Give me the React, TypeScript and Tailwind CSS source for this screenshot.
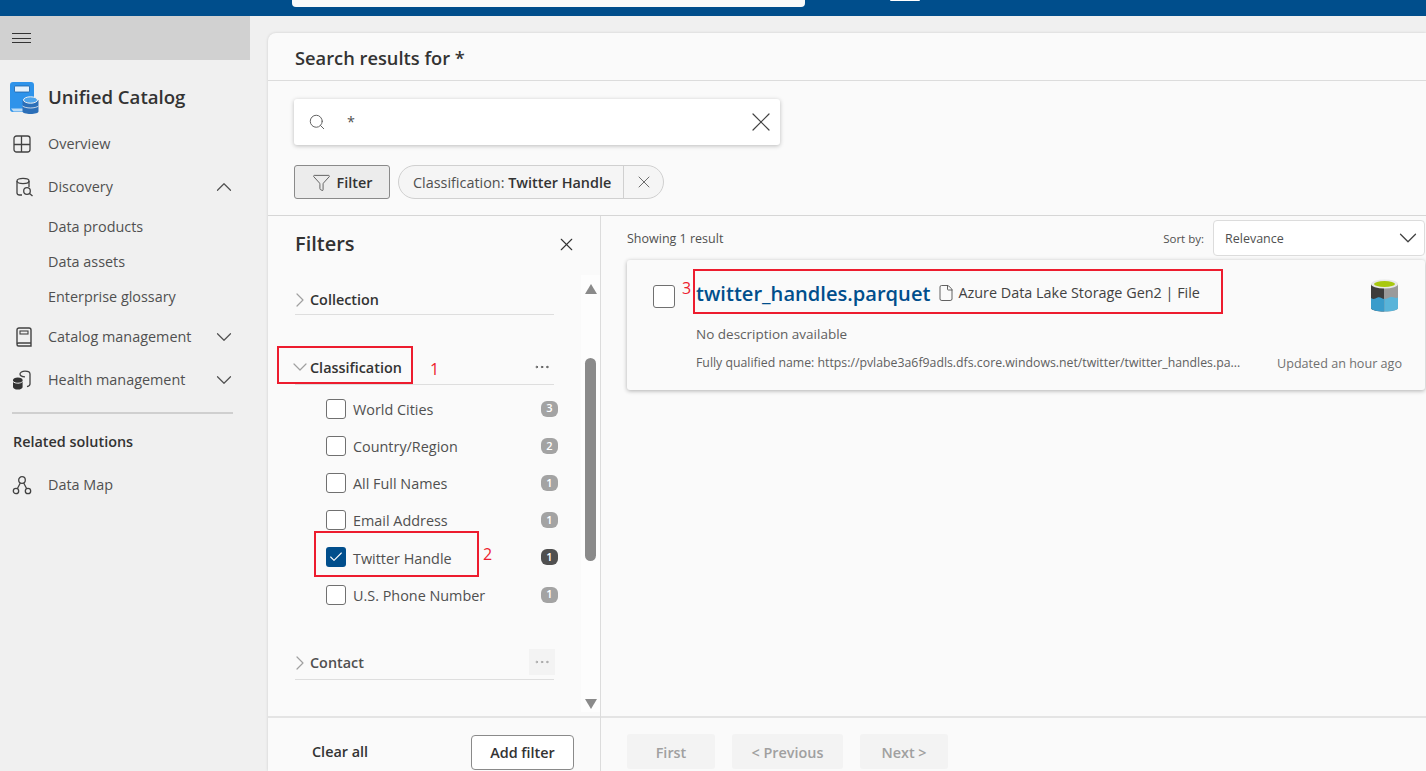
import { ChevronDown, ChevronRight, ChevronUp, Ellipsis, Search, X, Filter, File, Check } from "lucide-react"

const OverviewIcon = () => (
  <svg className="ml-[13px]" width="18" height="18" viewBox="0 0 18 18" fill="none" stroke="#424242" strokeWidth="1.3">
    <rect x="1" y="1" width="16" height="16" rx="2.5" />
    <path d="M8.5 1v16M1 9.5h16" />
  </svg>
)

const DiscoveryIcon = () => (
  <svg className="ml-[15px]" width="20" height="20" viewBox="0 0 20 20" fill="none" stroke="#424242" strokeWidth="1.3">
    <path d="M7 18H4.5C3 18 2 17.200 2 16V4" />
    <ellipse cx="8" cy="4" rx="6" ry="2.600" />
    <path d="M14 4v6" />
    <circle cx="12" cy="14" r="3.300" />
    <path d="M14.500 16.500l3 2.500" />
  </svg>
)

const BookIcon = () => (
  <svg className="ml-[15px]" width="18" height="20" viewBox="0 0 18 20" fill="none" stroke="#424242" strokeWidth="1.4">
    <path d="M2 17V3a2 2 0 0 1 2-2h10a2 2 0 0 1 2 2v16H3.500A1.500 1.500 0 0 1 2 17.500a1.500 1.500 0 0 1 1.500-1.500H16" />
    <rect x="5" y="4" width="8" height="3" strokeWidth="1.100" />
  </svg>
)

const HealthIcon = () => (
  <svg className="ml-[12px]" width="20" height="20" viewBox="0 0 20 20" fill="none">
    <path d="M8 4c0-1.600 2.200-2.800 5-2.800s5 1.200 5 2.800v10c0 1.300-1.200 2.200-3 2.600" stroke="#424242" strokeWidth="1.300" />
    <path d="M8 4c0 1.600 2.200 2.800 5 2.800" stroke="#424242" strokeWidth="1.300" />
    <path d="M1 10c0-1.500 2-2.600 4.800-2.600s4.800 1.100 4.800 2.600v7c0 1.500-2 2.600-4.800 2.600S1 18.500 1 17z" fill="#333" />
    <path d="M1 11.500c1.200 1.200 3 1.700 4.800 1.700s3.600-.5 4.800-1.700" stroke="#f0f0f0" strokeWidth="1" />
  </svg>
)

const DataMapIcon = () => (
  <svg className="ml-[12px]" width="20" height="20" viewBox="0 0 20 20" fill="none" stroke="#424242" strokeWidth="1.300">
    <circle cx="10" cy="5" r="3.300" />
    <circle cx="4" cy="16" r="2.700" />
    <circle cx="16" cy="16" r="2.700" />
    <path d="M8.300 8L5.300 13.700M11.700 8l3 5.700" />
  </svg>
)

const CatalogLogo = () => (
  <svg width="29" height="32" viewBox="0 0 29 32">
    <path d="M3 0h18a3 3 0 0 1 3 3v27H3a3 3 0 0 1-3-3V3a3 3 0 0 1 3-3z" fill="#2e93ea" />
    <rect x="4.500" y="4" width="15" height="6" rx="1" fill="#e3f1fc" stroke="#1c5fa5" strokeWidth=".8" />
    <path d="M1 26.500h14v3H3.500z" fill="#bcdcf6" />
    <path d="M12.500 18h16v11.500c0 1.400-3.600 2.500-8 2.500s-8-1.100-8-2.500z" fill="#2b6fb8" />
    <ellipse cx="20.500" cy="18" rx="7" ry="3.200" fill="#4ea5ec" stroke="#f0f0f0" strokeWidth="1" />
    <path d="M12.500 24c1.500 1.200 4.500 2 8 2s6.500-.8 8-2" fill="none" stroke="#f0f0f0" strokeWidth=".8" />
  </svg>
)

const StorageIcon = () => (
  <svg width="27" height="33" viewBox="0 0 27 33">
    <path d="M0 5h13.500v27.500C6 32.500 0 31 0 29z" fill="#3c3c3c" />
    <path d="M13.500 5H27v24c0 2-6 3.500-13.500 3.500z" fill="#9a9a9a" />
    <path d="M0 19c3 2 4 .5 6.500-.5 3-1 4 1.500 7 1.500v12.500C6 32.500 0 31 0 29z" fill="#3a9ccb" />
    <path d="M13.500 20c3 0 5-2.500 7.500-2s4 1.500 6 .5V29c0 2-6 3.500-13.500 3.500z" fill="#59b4d9" />
    <ellipse cx="13.500" cy="5" rx="13.500" ry="4.500" fill="#e8e8e8" />
    <ellipse cx="13.500" cy="5" rx="10.500" ry="3" fill="#a8c80f" />
  </svg>
)

const NavRow = ({ icon, label, chevron }: { icon: React.ReactNode; label: string; chevron?: "up" | "down" }) => (
  <div className="flex h-[43px] items-center text-[#505050]">
    <div className="flex w-[48px] shrink-0">{icon}</div>
    <span className="flex-1">{label}</span>
    {chevron === "up" && <ChevronUp className="mr-[13px] h-[26px] w-[26px]" strokeWidth={1.1} />}
    {chevron === "down" && <ChevronDown className="mr-[13px] h-[26px] w-[26px]" strokeWidth={1.1} />}
  </div>
)

const SubRow = ({ label }: { label: string }) => (
  <div className="flex h-[35px] items-center pl-[48px] text-[#505050]">{label}</div>
)

const FilterItem = ({ label, count, checked }: { label: string; count: number; checked?: boolean }) => (
  <div className="flex h-[37.200px] items-center pl-[58px] pr-[23px]">
    {checked ? (
      <div className="flex h-[20px] w-[20px] items-center justify-center rounded-[3px] bg-[#004e8c]">
        <Check className="h-[16px] w-[16px] text-white" strokeWidth={1.6} />
      </div>
    ) : (
      <div className="h-[20px] w-[20px] rounded-[3px] border border-[#707070] bg-white" />
    )}
    <span className="ml-[7px] flex-1 pt-[2px] text-[#505050]">{label}</span>
    <span
      className={
        checked
          ? "flex h-[16px] w-[17px] items-center justify-center rounded-[6px] bg-[#505050] text-[11px] font-semibold text-white"
          : "flex h-[16px] w-[17px] items-center justify-center rounded-[6px] bg-[#a3a3a3] text-[11px] font-semibold text-white"
      }
    >
      {count}
    </span>
  </div>
)

export default function App() {
  return (
    <div className="flex h-[771px] w-full flex-col overflow-hidden bg-[#f0f0f0] font-['Open_Sans',sans-serif] text-[14.400px] text-[#424242]">
      {/* top bar, cut off by the screenshot */}
      <div className="flex h-[16px] shrink-0 items-start bg-[#004e8c] pl-[292px]">
        <div className="h-[7px] w-[513px] rounded-b-[4px] bg-[#fafafa]" />
        <div className="ml-[85px] h-[1px] w-[30px] rounded-b bg-white" />
      </div>

      <div className="flex min-h-0 flex-1">
        <aside className="w-[250px] shrink-0">
          <div className="flex h-[44px] items-center bg-[#d1d1d1] pl-[12px]">
            <div className="flex w-[19px] flex-col gap-[3.500px]">
              <div className="h-px bg-[#333]" />
              <div className="h-px bg-[#333]" />
              <div className="h-px bg-[#333]" />
            </div>
          </div>
          <div className="mt-[22px] flex h-[31px] items-center pl-[9.500px]">
            <CatalogLogo />
            <span className="mb-[2px] ml-[9.500px] text-[18.600px] font-semibold text-[#333]">Unified Catalog</span>
          </div>
          <div className="mt-[9px]">
            <NavRow icon={<OverviewIcon />} label="Overview" />
            <NavRow icon={<DiscoveryIcon />} label="Discovery" chevron="up" />
            <div className="mt-px">
              <SubRow label="Data products" />
              <SubRow label="Data assets" />
              <SubRow label="Enterprise glossary" />
            </div>
            <div className="mt-px">
              <NavRow icon={<BookIcon />} label="Catalog management" chevron="down" />
              <NavRow icon={<HealthIcon />} label="Health management" chevron="down" />
            </div>
          </div>
          <div className="ml-[12px] mr-[17px] mt-[11px] h-[2px] bg-[#cfcfcf]" />
          <div className="mt-[17px] pl-[13px] font-semibold text-[#333]">Related solutions</div>
          <div className="mt-[11px]">
            <NavRow icon={<DataMapIcon />} label="Data Map" />
          </div>
        </aside>

        <main className="ml-[18px] mt-[17px] flex min-w-0 flex-1 flex-col rounded-tl-[8px] bg-[#fafafa] shadow-[0_0_3px_rgba(0,0,0,0.15)]">
          <div className="flex h-[48px] shrink-0 items-center border-b border-[#dcdcdc] pl-[27px] pt-[3px] text-[18.300px] font-semibold text-[#333]">
            Search results for *
          </div>

          <div className="shrink-0 border-b border-[#d6d6d6] pb-[16px] pl-[26px]">
            <div className="mt-[18px] flex h-[46px] w-[486px] items-center rounded-[3px] bg-white pl-[14px] pr-[3px] shadow-[0_1px_4px_rgba(0,0,0,0.25)]">
              <Search className="h-[18px] w-[18px] text-[#606060]" strokeWidth={1.3} />
              <span className="ml-[21px] flex-1 text-[#505050]">*</span>
              <X className="h-[32px] w-[32px] text-[#424242]" strokeWidth={0.9} />
            </div>
            <div className="mt-[20px] flex h-[34px] items-center">
              <div className="flex h-full w-[96px] items-center justify-center rounded-[3px] border border-[#8a8a8a] bg-[#ececec] font-semibold text-[#333]">
                <Filter className="mr-[6px] h-[19px] w-[19px] text-[#505050]" strokeWidth={1.1} />
                <span className="pt-[2px]">Filter</span>
              </div>
              <div className="ml-[8px] flex h-full w-[266px] items-center rounded-full border border-[#d0d0d0] bg-[#f5f5f5]">
                <div className="flex h-full flex-1 items-center border-r border-[#d0d0d0] pl-[14px] pt-[2px] text-[#505050]">
                  Classification:&nbsp;<span className="font-semibold text-[#333]">Twitter Handle</span>
                </div>
                <div className="flex w-[39px] justify-center">
                  <X className="h-[20px] w-[20px] text-[#505050]" strokeWidth={1} />
                </div>
              </div>
            </div>
          </div>

          <div className="flex min-h-0 flex-1">
            {/* filters pane */}
            <section className="flex w-[333px] shrink-0 flex-col border-r border-[#dcdcdc]">
              <div className="flex min-h-0 flex-1">
                <div className="min-w-0 flex-1">
                  <div className="flex h-[56px] items-center justify-between pl-[27px] pr-[4px]">
                    <span className="text-[20px] font-semibold text-[#333]">Filters</span>
                    <X className="h-[21px] w-[21px] text-[#333]" strokeWidth={1.3} />
                  </div>

                  <div className="relative mx-[27px] mt-[9px] flex h-[34px] items-center border-b border-[#dedede] pt-[4px] font-semibold text-[#333]">
                    <ChevronRight className="-ml-[7px] -mr-[2px] h-[24px] w-[24px] text-[#a0a0a0]" strokeWidth={1.2} />
                    Collection
                  </div>

                  <div className="relative mx-[27px] mt-[35px] flex h-[35px] items-center border-b border-[#dedede] font-semibold text-[#333]">
                    <ChevronDown className="-ml-[7px] -mr-[2px] h-[24px] w-[24px] text-[#a0a0a0]" strokeWidth={1.2} />
                    <span className="flex-1 pt-[2px]">Classification</span>
                    <Ellipsis className="mr-[3px] h-[18px] w-[18px] text-[#505050]" strokeWidth={1.3} />
                    {/* annotation */}
                    <div className="absolute -left-[18px] -top-[4px] h-[38px] w-[136px] border-2 border-[#ed1c2e]" />
                    <span className="absolute left-[135px] top-[7px] text-[16px] font-medium text-[#ed1c2e]">1</span>
                  </div>

                  <div className="mt-[5px]">
                    <FilterItem label="World Cities" count={3} />
                    <FilterItem label="Country/Region" count={2} />
                    <FilterItem label="All Full Names" count={1} />
                    <FilterItem label="Email Address" count={1} />
                    <div className="relative">
                      <FilterItem label="Twitter Handle" count={1} checked />
                      <div className="absolute left-[46px] top-[-8px] h-[46px] w-[165px] border-2 border-[#ed1c2e]" />
                      <span className="absolute left-[215px] top-[3px] text-[16px] font-medium text-[#ed1c2e]">2</span>
                    </div>
                    <FilterItem label="U.S. Phone Number" count={1} />
                  </div>

                  <div className="mx-[27px] mt-[31px] flex h-[36px] items-center justify-between border-b border-[#dedede] font-semibold text-[#505050]">
                    <div className="flex items-center pt-[2px]">
                      <ChevronRight className="-ml-[7px] -mr-[2px] h-[24px] w-[24px] text-[#a0a0a0]" strokeWidth={1.2} />
                      Contact
                    </div>
                    <div className="-mr-px flex h-[26px] w-[26px] items-center justify-center bg-[#f3f3f3]">
                      <Ellipsis className="h-[18px] w-[18px] text-[#a0a0a0]" strokeWidth={1.3} />
                    </div>
                  </div>
                </div>

                {/* scrollbar */}
                <div className="mt-[59px] mb-[4px] flex w-[19px] shrink-0 flex-col items-center bg-[#fdfdfd]">
                  <div className="mt-[9px] h-0 w-0 border-x-[6px] border-b-[10px] border-x-transparent border-b-[#8a8a8a]" />
                  <div className="mt-[64px] h-[203px] w-[11px] rounded-full bg-[#8a8a8a]" />
                  <div className="flex-1" />
                  <div className="mb-[3px] h-0 w-0 border-x-[6px] border-t-[10px] border-x-transparent border-t-[#8a8a8a]" />
                </div>
              </div>
              <div className="flex h-[55px] shrink-0 items-start justify-between border-t-2 border-[#e4e4e4] pl-[44px] pr-[26px]">
                <span className="mt-[23px] font-semibold text-[#333]">Clear all</span>
                <div className="mt-[17px] flex h-[35px] w-[103px] items-center justify-center rounded-[4px] border border-[#8a8a8a] bg-white font-semibold text-[#333]">
                  Add filter
                </div>
              </div>
            </section>

            {/* results */}
            <section className="flex min-w-0 flex-1 flex-col">
              <div className="flex-1 pl-[26px] pr-px pt-[4px]">
                <div className="flex h-[36px] items-center justify-between">
                  <span className="pt-[2px] text-[12.500px] text-[#505050]">Showing 1 result</span>
                  <div className="flex items-center">
                    <span className="mr-[9px] pt-[2px] text-[11.500px] text-[#505050]">Sort by:</span>
                    <div className="flex h-[36px] w-[212px] items-center justify-between rounded-[4px] border border-[#dcdcdc] bg-white pl-[11px] pr-px text-[12.500px] text-[#505050]">
                      <span className="pt-[2px]">Relevance</span>
                      <ChevronDown className="h-[30px] w-[30px] text-[#424242]" strokeWidth={1} />
                    </div>
                  </div>
                </div>

                <div className="relative mt-[4px] flex h-[130px] rounded-[3px] bg-[#fafafa] pl-[26px] pr-[23px] pt-[19px] shadow-[0_1px_4px_rgba(0,0,0,0.3)]">
                  <div className="mr-[21px] mt-[6px] h-[23px] w-[22px] shrink-0 rounded-[3px] border border-[#707070] bg-white" />
                  <div className="min-w-0 flex-1">
                    <div className="flex h-[28px] items-center">
                      <span className="pt-[2px] text-[20.100px] font-semibold text-[#004e8c]">twitter_handles.parquet</span>
                      <File className="ml-[7px] h-[18px] w-[18px] text-[#505050]" strokeWidth={1.2} />
                      <span className="ml-[3px] text-[#424242]">Azure Data Lake Storage Gen2 | File</span>
                      <div className="flex-1" />
                      <div className="mr-[4px] mt-[4px]">
                        <StorageIcon />
                      </div>
                    </div>
                    <div className="mt-[17px] text-[13.500px] text-[#606060]">No description available</div>
                    <div className="mt-[8px] flex items-center justify-between text-[12.300px] text-[#606060]">
                      <span>Fully qualified name: https://pvlabe3a6f9adls.dfs.core.windows.net/twitter/twitter_handles.pa...</span>
                      <span className="mt-[3px] text-[12.600px] text-[#707070]">Updated an hour ago</span>
                    </div>
                  </div>
                  {/* annotation */}
                  <div className="absolute left-[66px] top-[9px] h-[45px] w-[530px] border-2 border-[#ed1c2e]" />
                  <span className="absolute left-[55px] top-[16px] text-[16px] font-medium text-[#ed1c2e]">3</span>
                </div>
              </div>
              <div className="flex h-[55px] shrink-0 items-start gap-[17px] border-t-2 border-[#e4e4e4] pl-[26px] pt-[16px] font-semibold text-[#a0a0a0]">
                <div className="flex h-[35px] w-[88px] items-center justify-center rounded-[3px] bg-[#f3f3f3] pt-[2px]">First</div>
                <div className="flex h-[35px] w-[111px] items-center justify-center rounded-[3px] bg-[#f3f3f3] pt-[2px]">&lt; Previous</div>
                <div className="flex h-[35px] w-[88px] items-center justify-center rounded-[3px] bg-[#f3f3f3] pt-[2px]">Next &gt;</div>
              </div>
            </section>
          </div>
        </main>
      </div>
    </div>
  )
}
